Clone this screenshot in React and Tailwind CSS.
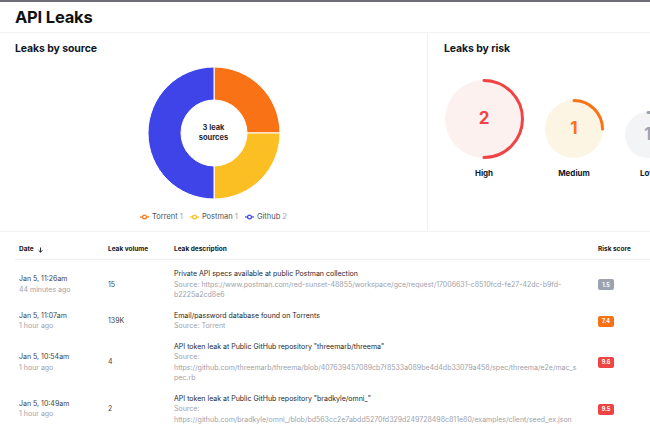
import React from 'react'

// donut slice, angles in degrees from top, clockwise
function slice(cx, cy, R, r, a0, a1) {
  const pt = (rad, a) => {
    const t = (a * Math.PI) / 180
    return [cx + rad * Math.sin(t), cy - rad * Math.cos(t)]
  }
  const large = a1 - a0 > 180 ? 1 : 0
  const [x0, y0] = pt(R, a0)
  const [x1, y1] = pt(R, a1)
  const [x2, y2] = pt(r, a1)
  const [x3, y3] = pt(r, a0)
  return `M${x0} ${y0} A${R} ${R} 0 ${large} 1 ${x1} ${y1} L${x2} ${y2} A${r} ${r} 0 ${large} 0 ${x3} ${y3} Z`
}

function arc(cx, cy, r, a0, a1) {
  const pt = (a) => {
    const t = (a * Math.PI) / 180
    return [cx + r * Math.sin(t), cy - r * Math.cos(t)]
  }
  const large = a1 - a0 > 180 ? 1 : 0
  const [x0, y0] = pt(a0)
  const [x1, y1] = pt(a1)
  return `M${x0} ${y0} A${r} ${r} 0 ${large} 1 ${x1} ${y1}`
}

const sources = [
  { name: 'Torrent', count: 1, color: '#f97316', from: 0, to: 90 },
  { name: 'Postman', count: 1, color: '#fbbf24', from: 90, to: 180 },
  { name: 'Github', count: 2, color: '#3f44e8', from: 180, to: 360 },
]

const risks = [
  { label: 'High', value: 2, size: 80, fill: '#fdf1f0', stroke: '#ef4444', text: 'text-[#ef4444]', sweep: 180 },
  { label: 'Medium', value: 1, size: 60, fill: '#fdf5e4', stroke: '#f97316', text: 'text-[#f97316]', sweep: 90 },
  { label: 'Low', value: 1, size: 48, fill: '#f3f4f6', stroke: '#9ca3af', text: 'text-[#9ca3af]', sweep: 90 },
]

const leaks = [
  {
    date: 'Jan 5, 11:26am',
    ago: '44 minutes ago',
    volume: '15',
    title: 'Private API specs available at public Postman collection',
    source: 'https://www.postman.com/red-sunset-48855/workspace/gce/request/17006631-c8510fcd-fe27-42dc-b9fd-b2225a2cd8e6',
    score: '1.5',
    badge: 'bg-[#9ca3af]',
  },
  {
    date: 'Jan 5, 11:07am',
    ago: '1 hour ago',
    volume: '139K',
    title: 'Email/password database found on Torrents',
    source: 'Torrent',
    score: '7.4',
    badge: 'bg-[#f97316]',
  },
  {
    date: 'Jan 5, 10:54am',
    ago: '1 hour ago',
    volume: '4',
    title: 'API token leak at Public GitHub repository "threemarb/threema"',
    source: 'https://github.com/threemarb/threema/blob/407639457089cb7f8533a089be4d4db33079a458/spec/threema/e2e/mac_spec.rb',
    score: '9.6',
    badge: 'bg-[#ef4444]',
  },
  {
    date: 'Jan 5, 10:49am',
    ago: '1 hour ago',
    volume: '2',
    title: 'API token leak at Public GitHub repository "bradkyle/omni_"',
    source: 'https://github.com/bradkyle/omni_/blob/bd563cc2e7abdd5270fd329d249728498c811e80/examples/client/seed_ex.json',
    score: '9.5',
    badge: 'bg-[#ef4444]',
  },
]

function Donut() {
  return (
    <div className="relative w-[132px] h-[132px]">
      <svg width="132" height="132" viewBox="0 0 132 132">
        {sources.map((s) => (
          <path key={s.name} d={slice(66, 66, 66, 33, s.from, s.to)} fill={s.color} stroke="#fff" strokeWidth="1" />
        ))}
      </svg>
      <div className="absolute inset-0 flex flex-col items-center justify-center text-[7.5px] leading-[10px] font-bold text-[#1f2937]">
        <span>3 leak</span>
        <span>sources</span>
      </div>
    </div>
  )
}

function RiskBubble({ r }) {
  const h = r.size / 2
  return (
    <div className="flex flex-col items-center shrink-0">
      <div className="relative" style={{ width: r.size, height: r.size }}>
        <svg width={r.size} height={r.size} viewBox={`0 0 ${r.size} ${r.size}`}>
          <circle cx={h} cy={h} r={h - 1} fill={r.fill} />
          <path d={arc(h, h, h - 1.5, 0, r.sweep)} fill="none" stroke={r.stroke} strokeWidth="3" strokeLinecap="round" />
        </svg>
        <div className={`absolute inset-0 flex items-center justify-center text-[17px] font-bold ${r.text}`}>{r.value}</div>
      </div>
      <span className="mt-[9px] text-[8px] leading-[10px] font-bold text-[#111827]">{r.label}</span>
    </div>
  )
}

export default function App() {
  return (
    <div className="w-[650px] h-[433px] overflow-hidden bg-white text-[#3f3f46] font-['Inter','Noto_Sans',sans-serif]">
      {/* header */}
      <header className="h-[33px] border-t-2 border-t-[#6e6e7a] border-b border-b-[#f1f1f3] px-[15px] flex items-center">
        <h1 className="text-[16.5px] font-bold text-[#111] tracking-[-0.2px]">API Leaks</h1>
      </header>

      {/* charts */}
      <section className="h-[199px] flex border-b border-[#f1f1f3]">
        <div className="w-[428px] shrink-0 border-r border-[#f1f1f3] px-[15px] pt-[8px] flex flex-col">
          <h2 className="text-[10.5px] leading-[16px] font-bold text-[#111827] tracking-[-0.1px]">Leaks by source</h2>
          <div className="mt-[10px] flex justify-center">
            <Donut />
          </div>
          <div className="mt-[13px] flex justify-center gap-[7px] text-[7.5px] leading-[10px]">
            {sources.map((s) => (
              <div key={s.name} className="flex items-center gap-[3px]">
                <svg width="9" height="6" viewBox="0 0 9 6">
                  <line x1="0" y1="3" x2="9" y2="3" stroke={s.color} strokeWidth="1.2" />
                  <circle cx="4.5" cy="3" r="1.9" fill="#fff" stroke={s.color} strokeWidth="1.2" />
                </svg>
                <span className="text-[#4b5563]">
                  {s.name} <span className="text-[#9ca3af]">{s.count}</span>
                </span>
              </div>
            ))}
          </div>
        </div>

        <div className="flex-1 min-w-0 overflow-hidden pl-[16px] pt-[8px]">
          <h2 className="text-[10.5px] leading-[16px] font-bold text-[#111827] tracking-[-0.1px] whitespace-nowrap">Leaks by risk</h2>
          <div className="mt-[22px] flex items-end gap-[20px]">
            {risks.map((r) => (
              <RiskBubble key={r.label} r={r} />
            ))}
          </div>
        </div>
      </section>

      {/* table */}
      <section className="ml-[15px] pt-[9px]">
        <div className="grid grid-cols-[89px_66px_424px_1fr] h-[19px] items-center border-b border-[#f1f1f3] text-[6.5px] font-bold text-[#111827]">
          <div className="pl-1 flex items-center gap-[4px]">
            Date
            <svg width="5" height="6" viewBox="0 0 5 6">
              <path d="M2.5 0.5V5.2M0.6 3.3L2.5 5.2L4.4 3.3" fill="none" stroke="#111827" strokeWidth="0.9" />
            </svg>
          </div>
          <div className="pl-1">Leak volume</div>
          <div className="pl-1">Leak description</div>
          <div className="pl-1">Risk score</div>
        </div>

        <div className="pt-[4px] text-[7px] leading-[10.5px]">
          {leaks.map((l) => (
            <div key={l.date} className="grid grid-cols-[89px_66px_424px_1fr] items-center py-[5px]">
              <div className="pl-1">
                <div className="text-[#3f3f46]">{l.date}</div>
                <div className="text-[#a1a1aa]">{l.ago}</div>
              </div>
              <div className="pl-1 text-[#3f3f46]">{l.volume}</div>
              <div className="pl-1 pr-[14px] break-words">
                <div className="text-[#27272a]">{l.title}</div>
                <div className="text-[#a1a1aa]">Source: {l.source}</div>
              </div>
              <div className="pl-1">
                <span className={`inline-flex items-center justify-center w-[16px] h-[11px] rounded-[2px] text-[5.5px] font-bold text-white ${l.badge}`}>
                  {l.score}
                </span>
              </div>
            </div>
          ))}
        </div>
      </section>
    </div>
  )
}
